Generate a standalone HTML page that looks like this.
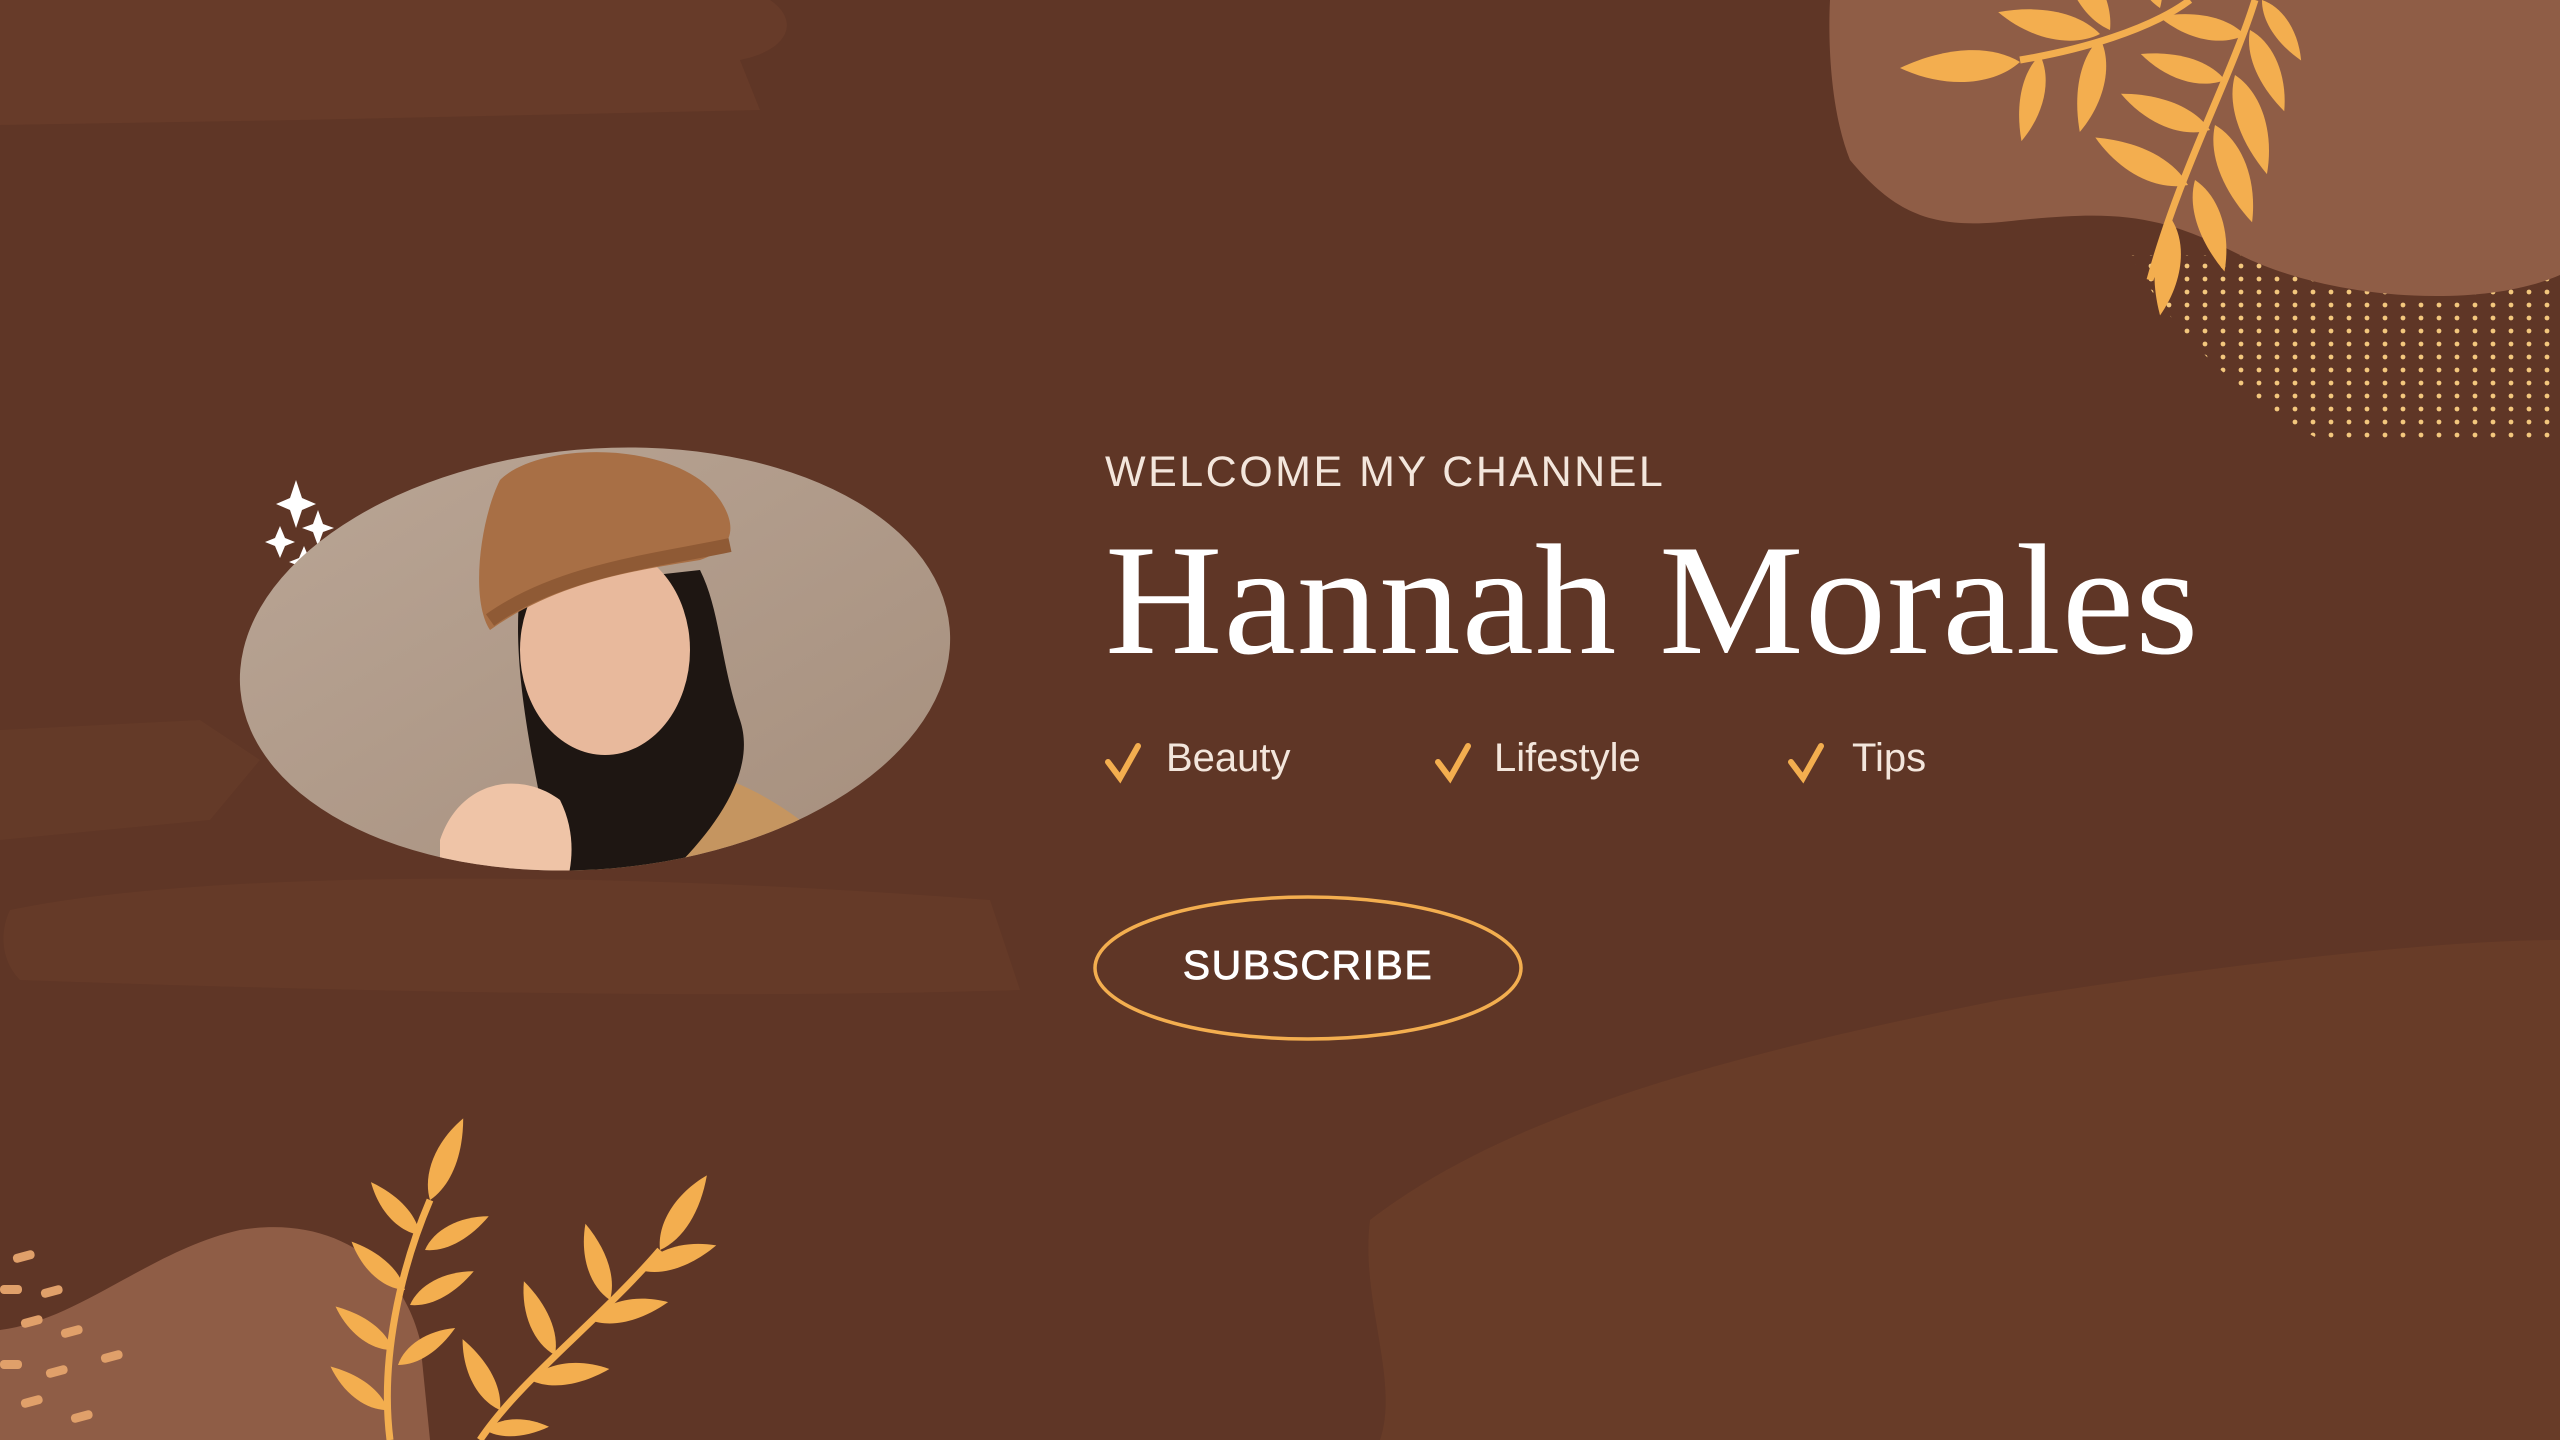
<!DOCTYPE html>
<html><head><meta charset="utf-8"><style>
html,body{margin:0;padding:0;background:#5f3626;}
body{width:2560px;height:1440px;position:relative;overflow:hidden;font-family:"Liberation Sans",sans-serif;}
.t{position:absolute;color:#f3e6dc;white-space:nowrap;}
</style></head><body>
<svg width="2560" height="1440" viewBox="0 0 2560 1440" style="position:absolute;left:0;top:0">
<defs>
<g id="leaf"><path d="M0 0 C18 -16 50 -18 80 -4 C50 10 20 12 0 0Z" fill="#f3ae4f"/></g>
<clipPath id="ph"><ellipse cx="595" cy="659" rx="356" ry="210" transform="rotate(-5 595 659)"/></clipPath>
<linearGradient id="bgp" x1="0" y1="0" x2="1" y2="1"><stop offset="0" stop-color="#bba797"/><stop offset="1" stop-color="#a48d7b"/></linearGradient>
<pattern id="dots" x="0" y="0" width="18" height="13" patternUnits="userSpaceOnUse"><circle cx="9" cy="6" r="2.4" fill="#f3c77d"/></pattern>
</defs>
<path d="M0 0 L770 0 C800 20 790 50 740 60 L760 110 L300 120 L0 125Z" fill="#673b29"/>
<path d="M0 730 L200 720 L260 760 L210 820 L0 840Z" fill="#643a28"/>
<path d="M10 910 C200 870 600 870 990 900 L1020 990 C700 1000 300 990 20 980 C0 960 0 930 10 910Z" fill="#653a28"/>
<path d="M1370 1220 C1500 1120 1700 1060 2000 1000 C2250 960 2450 940 2560 940 L2560 1440 L1380 1440 C1400 1380 1360 1300 1370 1220Z" fill="#683c28"/>
<path d="M2130 255 L2560 255 L2560 445 L2330 445 C2240 400 2170 330 2130 255Z" fill="url(#dots)"/>
<path d="M1830 0 L2560 0 L2560 275 C2480 310 2330 300 2240 255 C2160 215 2120 210 2020 220 C1940 230 1900 220 1850 160 C1830 110 1828 40 1830 0Z" fill="#8f5d46"/>
<g stroke="#f3ae4f" stroke-width="7" fill="none"><path d="M2190 0 C2150 30 2080 50 2020 60"/><path d="M2255 0 C2230 80 2180 170 2150 280"/></g>
<g>
<use href="#leaf" transform="translate(2020 62) rotate(180) scale(1.5)"/>
<use href="#leaf" transform="translate(2100 34) rotate(195) scale(1.3)"/>
<use href="#leaf" transform="translate(2110 30) rotate(-115) scale(1.3)"/>
<use href="#leaf" transform="translate(2160 8) rotate(-105) scale(1.2)"/>
<use href="#leaf" transform="translate(2040 55) rotate(105) scale(1.1)"/>
<use href="#leaf" transform="translate(2100 38) rotate(105) scale(1.2)"/>
<use href="#leaf" transform="translate(2245 35) rotate(195) scale(1.1)"/>
<use href="#leaf" transform="translate(2225 80) rotate(200) scale(1.1)"/>
<use href="#leaf" transform="translate(2210 130) rotate(205) scale(1.2)"/>
<use href="#leaf" transform="translate(2188 185) rotate(210) scale(1.3)"/>
<use href="#leaf" transform="translate(2250 30) rotate(70) scale(1.1)"/>
<use href="#leaf" transform="translate(2235 75) rotate(75) scale(1.3)"/>
<use href="#leaf" transform="translate(2215 125) rotate(72) scale(1.3)"/>
<use href="#leaf" transform="translate(2195 180) rotate(75) scale(1.2)"/>
<use href="#leaf" transform="translate(2172 220) rotate(100) scale(1.2)"/>
<use href="#leaf" transform="translate(2262 0) rotate(60) scale(0.9)"/>
</g>
<path d="M0 1440 L0 1330 C80 1320 150 1250 240 1230 C330 1215 400 1260 420 1340 L430 1440Z" fill="#8f5d46"/>
<g fill="#e0a06a"><rect x="12" y="1255" width="22" height="9" rx="4" transform="rotate(-15 12 1255)"/><rect x="0" y="1285" width="22" height="9" rx="4"/><rect x="40" y="1290" width="22" height="9" rx="4" transform="rotate(-15 40 1290)"/><rect x="20" y="1320" width="22" height="9" rx="4" transform="rotate(-15 20 1320)"/><rect x="60" y="1330" width="22" height="9" rx="4" transform="rotate(-15 60 1330)"/><rect x="0" y="1360" width="22" height="9" rx="4"/><rect x="45" y="1370" width="22" height="9" rx="4" transform="rotate(-15 45 1370)"/><rect x="100" y="1355" width="22" height="9" rx="4" transform="rotate(-15 100 1355)"/><rect x="20" y="1400" width="22" height="9" rx="4" transform="rotate(-15 20 1400)"/><rect x="70" y="1415" width="22" height="9" rx="4" transform="rotate(-15 70 1415)"/></g>
<g stroke="#f3ae4f" stroke-width="7" fill="none"><path d="M390 1440 C380 1360 400 1270 430 1200"/><path d="M480 1440 C520 1380 600 1320 660 1250"/></g>
<use href="#leaf" transform="translate(430 1200) rotate(-65) scale(1.1)"/>
<use href="#leaf" transform="translate(420 1235) rotate(-130) scale(0.9)"/>
<use href="#leaf" transform="translate(425 1250) rotate(-25) scale(0.9)"/>
<use href="#leaf" transform="translate(405 1290) rotate(-135) scale(0.9)"/>
<use href="#leaf" transform="translate(410 1305) rotate(-25) scale(0.9)"/>
<use href="#leaf" transform="translate(393 1350) rotate(-140) scale(0.9)"/>
<use href="#leaf" transform="translate(398 1365) rotate(-30) scale(0.85)"/>
<use href="#leaf" transform="translate(388 1410) rotate(-140) scale(0.9)"/>
<use href="#leaf" transform="translate(660 1250) rotate(-55) scale(1.1)"/>
<use href="#leaf" transform="translate(640 1270) rotate(-15) scale(1)"/>
<use href="#leaf" transform="translate(610 1300) rotate(-105) scale(1)"/>
<use href="#leaf" transform="translate(590 1320) rotate(-10) scale(1)"/>
<use href="#leaf" transform="translate(555 1355) rotate(-110) scale(1)"/>
<use href="#leaf" transform="translate(530 1380) rotate(-5) scale(1)"/>
<use href="#leaf" transform="translate(500 1410) rotate(-115) scale(1)"/>
<use href="#leaf" transform="translate(485 1430) rotate(0) scale(0.8)"/>
<g fill="#fff"><path d="M296 480 L302 498 L316 504 L302 510 L296 528 L290 510 L276 504 L290 498Z"/><path d="M318 510 L323 524 L334 528 L323 532 L318 546 L313 532 L302 528 L313 524Z"/><path d="M280 526 L285 538 L295 542 L285 546 L280 558 L275 546 L265 542 L275 538Z"/><path d="M304 546 L309 558 L319 562 L309 566 L304 578 L299 566 L289 562 L299 558Z"/></g>
<g clip-path="url(#ph)">
<rect x="200" y="420" width="800" height="480" fill="url(#bgp)"/>
<path d="M650 770 C700 760 760 790 800 820 L820 900 L560 900 C580 840 610 780 650 770Z" fill="#c59560"/>
<path d="M520 590 C510 680 540 790 560 900 L640 900 C700 850 760 780 740 720 C720 660 720 610 700 570Z" fill="#1e1612"/>
<ellipse cx="605" cy="650" rx="85" ry="105" fill="#e8b99c"/>
<path d="M440 840 C460 780 520 770 560 800 C580 840 570 880 560 900 L440 900Z" fill="#efc4a7"/>
<path d="M500 480 C540 440 680 440 720 500 C740 530 730 550 700 560 C640 570 560 580 490 630 C470 600 480 520 500 480Z" fill="#a86f45"/>
<path d="M490 620 C560 570 660 560 730 545" stroke="#8f5a35" stroke-width="14" fill="none"/>
</g>
<ellipse cx="1308" cy="968" rx="213" ry="71" fill="none" stroke="#f3ae4f" stroke-width="3.5"/>
<g stroke="#f3ae4f" stroke-width="6" fill="none" stroke-linecap="round"><path d="M1108 762 L1120 778 L1138 746"/><path d="M1438 762 L1450 778 L1468 746"/><path d="M1791 762 L1803 778 L1821 746"/></g>
</svg>
<div class="t" style="left:1105px;top:448px;font-size:43px;letter-spacing:2.5px;">WELCOME MY CHANNEL</div>
<div class="t" style="left:1105px;top:510px;font-family:'Liberation Serif',serif;font-size:158px;color:#fff;letter-spacing:1px;transform:scaleX(1.03);transform-origin:left;">Hannah Morales</div>
<div class="t" style="left:1166px;top:736px;font-size:40px;">Beauty</div>
<div class="t" style="left:1494px;top:736px;font-size:40px;">Lifestyle</div>
<div class="t" style="left:1852px;top:736px;font-size:40px;">Tips</div>
<div class="t" style="left:1180px;top:942px;width:256px;text-align:center;font-size:41px;color:#fff;letter-spacing:1.5px;-webkit-text-stroke:0.8px #fff;">SUBSCRIBE</div>
</body></html>
